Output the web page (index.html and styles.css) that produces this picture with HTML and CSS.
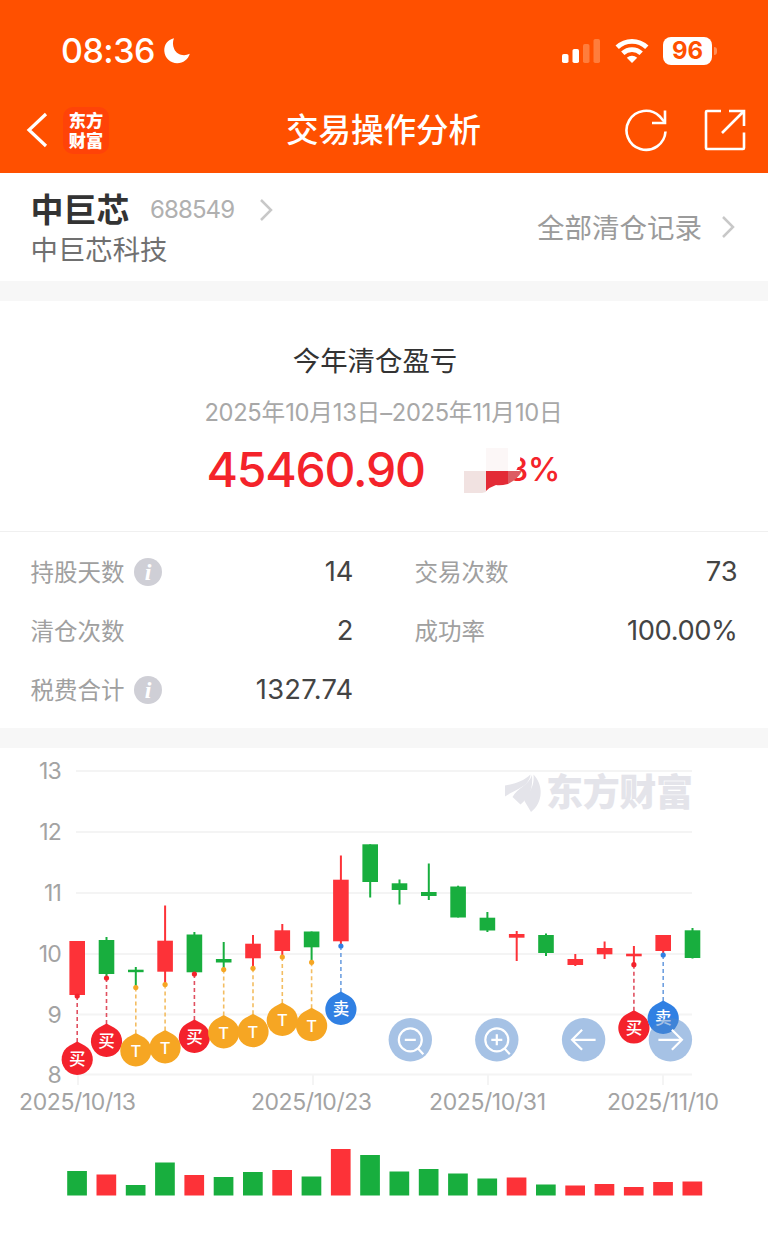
FILE: index.html
```html
<!DOCTYPE html>
<html lang="zh-CN">
<head>
<meta charset="utf-8">
<title>交易操作分析</title>
<link rel="stylesheet" href="styles.css">
</head>
<body>
<header class="header">
  <div class="status">
    <span class="time">08:36</span>
    <svg class="moon" width="28" height="28" viewBox="0 0 28 28"><path d="M11 1.2C4.600 2.500 1 7.800 1.300 14C1.700 21.300 7.500 26.200 14.200 26.200C20.400 26.200 25 22.500 26.800 16.800C20.500 19.800 13.600 17.600 11.200 12C9.600 8.300 9.600 4.600 11 1.200Z" fill="#fff"/></svg>
    <svg class="signal" width="40" height="26" viewBox="0 0 40 26">
      <rect x="1" y="16" width="6.500" height="9" rx="1.800" fill="#fff"/>
      <rect x="11.500" y="11" width="6.500" height="14" rx="1.800" fill="#fff"/>
      <rect x="22" y="6" width="6.500" height="19" rx="1.800" fill="#ff7d3c"/>
      <rect x="32.500" y="1" width="6.500" height="24" rx="1.800" fill="#ff7d3c"/>
    </svg>
    <svg class="wifi" width="34" height="26" viewBox="0 0 34 26">
      <g fill="none" stroke="#fff" stroke-width="4.800">
        <path d="M2.200 9.300C10.500 1.300 23.500 1.300 31.800 9.300"/>
        <path d="M7.800 15.300C13 10.400 21 10.400 26.200 15.300"/>
      </g>
      <path d="M11.800 19.800C14.800 17.100 19.200 17.100 22.200 19.800L17 25Z" fill="#fff"/>
    </svg>
    <span class="battery">96</span><i class="battery-tip"></i>
  </div>
  <nav class="nav">
    <svg class="back" width="22" height="36" viewBox="0 0 22 36"><path d="M20 2L3 18L20 34" fill="none" stroke="#fff" stroke-width="3.200"/></svg>
    <span class="brand">东方<br>财富</span>
    <h1 class="title">交易操作分析</h1>
    <svg class="refresh" width="44" height="44" viewBox="0 0 44 44"><g fill="none" stroke="#fff" stroke-width="2.600"><path d="M41.500 23.500A19.500 19.500 0 1 1 35.500 8.200L40.500 14"/><path d="M41 2.500V15H28"/></g></svg>
    <svg class="share" width="44" height="44" viewBox="0 0 44 44"><g fill="none" stroke="#fff" stroke-width="2.600"><path d="M18 3H4Q3 3 3 4V40Q3 41 4 41H40Q41 41 41 40V24.500"/><path d="M26 3H41V18M41 3L19 25"/></g></svg>
  </nav>
</header>

<section class="stock">
  <div class="stock-main">
    <div class="stock-line">
      <strong class="stock-name">中巨芯</strong>
      <span class="stock-code">688549</span>
      <svg class="chev" width="14" height="24" viewBox="0 0 14 24"><path d="M2 2L12 12L2 22"/></svg>
    </div>
    <div class="company">中巨芯科技</div>
  </div>
  <div class="records"><span>全部清仓记录</span><svg class="chev" width="14" height="24" viewBox="0 0 14 24"><path d="M2 2L12 12L2 22"/></svg></div>
</section>

<section class="summary">
  <h2 class="sum-title">今年清仓盈亏</h2>
  <div class="range"><span>2025</span>年<span>10</span>月<span>13</span>日<span>–2025</span>年<span>11</span>月<span>10</span>日</div>
  <div class="profit">
    <span class="amount">45460.90</span>
    <span class="rate">8%<svg class="mosaic" width="76" height="52" viewBox="0 0 76 52">
      <path d="M0 0H70Q74 12 67 25L60 33L44 38L36 44L32 52H0Z" fill="#fff"/>
      <rect x="37" y="2" width="22" height="23" fill="#fcf7f7"/>
      <path d="M15 25H37V46L33 47H15Z" fill="#f1e2e1"/>
      <path d="M37 25H59V38Q51 40 47 39Q41 41 37 45Z" fill="#e32b36"/>
      <path d="M59 25H73Q69 33 59 38Z" fill="#dc5c63"/>
    </svg></span>
  </div>
</section>

<section class="stats">
  <div class="stat"><span>持股天数</span><i class="info">i</i><b>14</b></div>
  <div class="stat"><span>交易次数</span><b>73</b></div>
  <div class="stat"><span>清仓次数</span><b>2</b></div>
  <div class="stat"><span>成功率</span><b class="pct">100.00%</b></div>
  <div class="stat"><span>税费合计</span><i class="info">i</i><b class="fee">1327.74</b></div>
</section>

<section class="chart">
  <svg id="chart" width="768" height="488" viewBox="0 748 768 488"></svg>
</section>
<script src="chart.js"></script>
</body>
</html>
```

FILE: styles.css
```css
* { box-sizing: border-box; margin: 0; padding: 0; }
body {
  width: 768px;
  height: 1236px;
  overflow: hidden;
  background: #fff;
  font-family: Inter, "Noto Sans CJK SC", sans-serif;
  color: #333;
}
svg { display: block; flex: none; }
span, strong, b { white-space: nowrap; }

.header { height: 172.500px; background: #ff5000; color: #fff; }
.status { display: flex; align-items: center; height: 88px; padding: 13px 0 0 61px; }
.time { width: 102px; font-size: 34px; font-weight: 500; letter-spacing: -0.500px; }
.signal { margin-left: 370px; }
.wifi { margin-left: 14px; }
.battery {
  width: 49px; height: 28px; margin-left: 14px; border-radius: 8px;
  background: #fff; color: #ff5000;
  font-size: 24px; font-weight: 700; line-height: 28px; text-align: center;
}
.battery-tip { width: 3px; height: 8px; margin-left: 2px; border-radius: 0 4px 4px 0; background: #ff8f58; }
.nav { display: flex; align-items: center; height: 84px; padding-left: 26px; }
.brand {
  width: 46px; height: 47px; margin-left: 15px; padding-top: 3px; border-radius: 10px;
  background: #ff4308; text-align: center;
  font-family: "Noto Sans CJK SC", sans-serif; font-size: 17.200px; font-weight: 900; line-height: 20px;
}
.title { width: 196px; margin-left: 177px; padding-top: 1px; font-size: 32.500px; font-weight: 500; line-height: 44px; white-space: nowrap; }
.refresh { margin-left: 142px; }
.share { margin-left: 35px; }

.stock { display: flex; justify-content: space-between; height: 108.500px; padding: 17px 33px 0 30.500px; }
.stock-line { display: flex; align-items: center; height: 40px; }
.stock-name { width: 119.500px; font-size: 33px; font-weight: 700; line-height: 40px; }
.stock-code { width: 108.500px; font-size: 24px; color: #b0b0b0; letter-spacing: -0.900px; }
.company { font-size: 27.400px; line-height: 40px; color: #707070; }
.records { display: flex; align-items: center; height: 74px; font-size: 27.500px; color: #9b9b9b; }
.records span { margin-top: -1px; }
.records .chev { margin-left: 19px; }
.chev path { fill: none; stroke: #c8c8c8; stroke-width: 2.500; }

.summary {
  display: flex; flex-direction: column; align-items: center;
  height: 250.500px; padding-top: 40px;
  border-top: 20px solid #f7f7f7; border-bottom: 1px solid #f0f0f0;
}
.sum-title { margin-right: 18px; font-size: 27.400px; font-weight: 400; line-height: 40px; }
.range { margin-top: 14px; margin-right: 1px; font-size: 23.700px; line-height: 36px; color: #a8a8a8; white-space: nowrap; }
.range span { letter-spacing: -0.300px; }
.profit { display: flex; align-items: center; width: 352px; height: 64px; margin-top: 6px; color: #f4232a; }
.amount { width: 302px; margin-left: -1.500px; font-size: 48px; font-weight: 550; letter-spacing: -1.200px; }
.rate { position: relative; font-size: 33px; font-weight: 550; letter-spacing: -0.500px; }
.mosaic { position: absolute; left: -58.500px; top: -3px; }

.stats {
  display: grid; grid-template-columns: 323px 323px; column-gap: 61px;
  grid-auto-rows: 59.200px; height: 216.500px; padding: 10.500px 30.500px 0;
  border-bottom: 20px solid #f7f7f7;
}
.stat { display: flex; align-items: center; font-size: 23.500px; color: #a0a0a0; }
.stat span { margin-top: -2px; }
.stat b { margin-left: auto; font-size: 27.300px; font-weight: 400; color: #444; }
.stat .pct { letter-spacing: -0.400px; }
.stat .fee { letter-spacing: 0.300px; }
.info {
  width: 28px; height: 28px; margin-left: 9.500px; border-radius: 50%;
  background: #cfcfd6; color: #fff; text-align: center;
  font: italic 700 24px/28px "Liberation Serif", serif;
}

.grid { stroke: #f4f4f4; stroke-width: 2; }
.axis { font-size: 23px; fill: #a3a3a3; }
.up { fill: #fd3238; }
.down { fill: #18ae3e; }
.buy { fill: #f4222c; stroke: #e05060; }
.trade { fill: #f6a623; stroke: #f3bd62; }
.sell { fill: #3080e3; stroke: #6fa0e0; }
.lead { fill: none; stroke-width: 1.600; stroke-dasharray: 4 3; }
.pin { stroke: none; }
.pin-text { fill: #fff; font-size: 16.500px; font-weight: 500; text-anchor: middle; }
.btn { fill: #4d85cb; fill-opacity: 0.5; }
.btn-icon { fill: none; stroke: #fff; stroke-width: 2.200; }
.mark { fill: #e4e4ea; }
.mark-text { font-family: "Noto Sans CJK SC", sans-serif; font-size: 37px; font-weight: 900; }
```

FILE: chart.js
```js
const X0 = 77.2, STEP = 29.3;
// [direction, high, body top, body bottom, low, volume top, volume direction]
const candles = [
  ['up', 941, 941, 995, 996, 1171, 'down'],
  ['down', 937, 940, 974, 977, 1174.5, 'up'],
  ['down', 967, 969.7, 972.2, 986, 1185, 'down'],
  ['up', 905.5, 940.700, 971.700, 983, 1162.5, 'down'],
  ['down', 932, 934.5, 972.3, 974, 1175, 'up'],
  ['down', 942, 959, 962.5, 968, 1177, 'down'],
  ['up', 935, 943.7, 958.3, 967, 1172, 'down'],
  ['up', 924, 930.300, 951, 956, 1170, 'up'],
  ['down', 931.5, 931.5, 947.3, 961, 1176.5, 'down'],
  ['up', 855.5, 879.7, 941.3, 945, 1149, 'up'],
  ['down', 844.3, 844.3, 882, 897.5, 1155, 'down'],
  ['down', 879.5, 883.3, 890, 904.5, 1171.5, 'down'],
  ['down', 863.5, 892, 896, 900, 1169, 'down'],
  ['down', 885.7, 886.5, 917.5, 917.5, 1173.5, 'down'],
  ['down', 912, 917.7, 930.5, 932, 1178.5, 'down'],
  ['up', 931, 934, 937.7, 961, 1177.5, 'up'],
  ['down', 933.5, 935, 953, 956, 1184.5, 'down'],
  ['up', 954, 959, 965, 966, 1185.5, 'up'],
  ['up', 941.5, 948, 954.3, 959, 1184, 'up'],
  ['up', 946, 953.7, 956.3, 964, 1187, 'up'],
  ['up', 935, 935, 951, 953, 1182, 'up'],
  ['down', 928, 930.3, 958, 958.5, 1181.5, 'up']
];
const trades = [
  [0, 'buy', 996], [1, 'buy', 978], [2, 'trade', 987.5], [3, 'trade', 984.5],
  [4, 'buy', 974], [5, 'trade', 969.5], [6, 'trade', 968.3], [7, 'trade', 957],
  [8, 'trade', 962.3], [9, 'sell', 946], [19, 'buy', 964.700], [20, 'sell', 955]
];
const label = { buy: '买', trade: 'T', sell: '卖' };
const x = i => X0 + STEP * i;
let out = '';

[[13, 771], [12, 832], [11, 893], [10, 954], [9, 1014.500], [8, 1074.500]].forEach(([v, y]) => {
  out += `<path class="grid" d="M76 ${y}H692"/><text class="axis" x="61" y="${y + 8}" text-anchor="end" letter-spacing="-0.8">${v}</text>`;
});
[[78, '2025/10/13', 19, 117], [313, '2025/10/23', 251, 121], [488, '2025/10/31', 429, 117], [663, '2025/11/10', 607, 112]].forEach(([t, s, l, w]) => {
  out += `<path class="grid" d="M${t} 1075V1085"/><text class="axis" x="${l}" y="1110" textLength="${w}">${s}</text>`;
});

out += `<g class="mark"><path d="M505 785.500C514 784 524 781 530.500 774.500C529 787 516 789 505 796.500Z"/>
<path d="M532 775C529 785 517 788 512.500 797L520.500 804.500C530 797 533 788 532 775Z"/>
<path d="M533.500 774.500C535 790 526 793 524.500 801L531 812C544 802 543 784 533.500 774.500Z"/>
<text class="mark-text" x="546" y="806" textLength="147">东方财富</text></g>`;

candles.forEach(([dir, hi, top, bottom, lo, vol, volDir], i) => {
  out += `<g class="${dir}"><rect x="${x(i) - 1}" y="${hi}" width="2" height="${lo - hi}"/>
  <rect x="${x(i) - 7.8}" y="${top}" width="15.600" height="${bottom - top}"/></g>
  <rect class="${volDir}" x="${x(i) - 10}" y="${vol}" width="19.700" height="${1195.5 - vol}"/>`;
});

trades.forEach(([i, kind, y]) => {
  const cx = x(i), cy = y + 63.3;
  out += `<g class="${kind}"><path class="lead" d="M${cx} ${y}V${cy - 17}"/><circle class="pin" cx="${cx}" cy="${y}" r="2.600"/>
  <path class="pin" d="M${cx} ${cy - 17.8}L${cx + 7.8} ${cy - 13.500}A15.600 15.600 0 1 1 ${cx - 7.8} ${cy - 13.500}Z"/></g>
  <text class="pin-text" x="${cx}" y="${cy + 6}">${label[kind]}</text>`;
});

const icons = [
  '<circle cx="0" cy="0" r="11.500"/><path d="M-5.500 0H5.500M8 9L13 14.500"/>',
  '<circle cx="0" cy="0" r="11.500"/><path d="M-5.500 0H5.500M0 -5.500V5.500M8 9L13 14.500"/>',
  '<path d="M12 0H-11M-1.500 -10L-11.500 0L-1.500 10"/>',
  '<path d="M-12 0H11M1.500 -10L11.500 0L1.500 10"/>'
];
[410.3, 496.8, 583.6, 670.4].forEach((cx, i) => {
  out += `<circle class="btn" cx="${cx}" cy="1039.800" r="21.700"/><g class="btn-icon" transform="translate(${cx} 1039.800)">${icons[i]}</g>`;
});
document.getElementById('chart').innerHTML = out;
```
